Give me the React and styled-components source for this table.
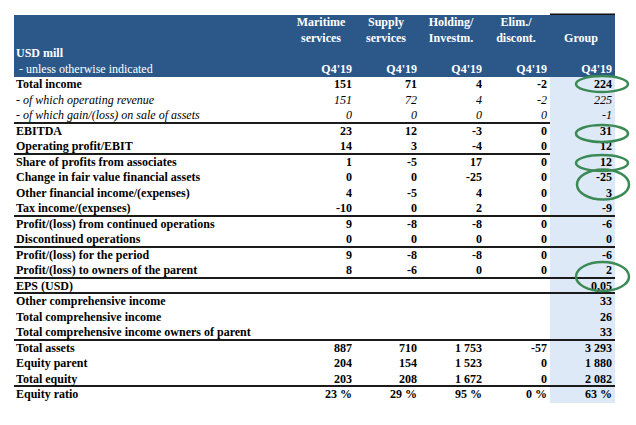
import React from "react";
import styled, { createGlobalStyle } from "styled-components";

const GlobalStyle = createGlobalStyle`
  html, body {
    margin: 0;
    padding: 0;
    background: #fff;
  }
  body {
    font-family: "Liberation Serif", "Times New Roman", serif;
    font-size: 12px;
    color: #000;
  }
`;

const BLUE = "#2b5889";
const LIGHT = "#dde9f6";
const COLS = "276px repeat(5, 65px)";

const Page = styled.div`
  position: relative;
  width: 636px;
  height: 425px;
  box-sizing: border-box;
  padding: 15px 0 0 14px;
  overflow: hidden;
`;

const Table = styled.div`
  width: 601px;
`;

const Head = styled.div`
  display: grid;
  grid-template-columns: ${COLS};
  background: ${BLUE};
  color: #fff;
  font-weight: bold;
`;

const HeadCol = styled.div`
  display: grid;
  grid-template-rows: repeat(4, 15.5px);
  line-height: 15.5px;
  white-space: nowrap;
  ${(p) => p.$top && "box-shadow: 0 -1.5px 0 #111;"}
`;

const HeadLine = styled.div`
  text-align: ${(p) => p.$align || "center"};
  padding: 0 3px 0 ${(p) => (p.$indent ? "2px" : "0")};
  font-weight: ${(p) => (p.$light ? "normal" : "bold")};
`;

const Row = styled.div`
  display: grid;
  grid-template-columns: ${COLS};
  height: 15.5px;
  line-height: 15.5px;
`;

const Cell = styled.div`
  box-sizing: border-box;
  padding: 0 3px;
  text-align: right;
  white-space: nowrap;
  font-weight: ${(p) => (p.$italic ? "normal" : "bold")};
  font-style: ${(p) => (p.$italic ? "italic" : "normal")};
  background: ${(p) => (p.$group ? LIGHT : "transparent")};
  box-shadow: ${(p) => (p.$rule ? "inset 0 -2px 0 #1b1b1b" : "none")};
`;

const Label = styled(Cell)`
  text-align: left;
  padding-left: 2px;
`;

const Dash = styled.span`
  font-style: normal;
`;

const Marks = styled.svg`
  position: absolute;
  top: 0;
  left: 0;
  pointer-events: none;
`;

const columns = [
  ["Maritime", "services"],
  ["Supply", "services"],
  ["Holding/", "Investm."],
  ["Elim./", "discont."],
  ["", "Group"],
];

const rows = [
  { label: "Total income", v: ["151", "71", "4", "-2", "224"] },
  { label: "of which operating revenue", italic: true, v: ["151", "72", "4", "-2", "225"] },
  { label: "of which gain/(loss) on sale of assets", italic: true, v: ["0", "0", "0", "0", "-1"], rule: "part" },
  { label: "EBITDA", v: ["23", "12", "-3", "0", "31"] },
  { label: "Operating profit/EBIT", v: ["14", "3", "-4", "0", "12"], rule: "part" },
  { label: "Share of profits from associates", v: ["1", "-5", "17", "0", "12"] },
  { label: "Change in fair value financial assets", v: ["0", "0", "-25", "0", "-25"] },
  { label: "Other financial income/(expenses)", v: ["4", "-5", "4", "0", "3"] },
  { label: "Tax income/(expenses)", v: ["-10", "0", "2", "0", "-9"], rule: "full" },
  { label: "Profit/(loss) from continued operations", v: ["9", "-8", "-8", "0", "-6"] },
  { label: "Discontinued operations", v: ["0", "0", "0", "0", "0"], rule: "full" },
  { label: "Profit/(loss) for the period", v: ["9", "-8", "-8", "0", "-6"] },
  { label: "Profit/(loss) to owners of the parent", v: ["8", "-6", "0", "0", "2"], rule: "full" },
  { label: "EPS (USD)", v: ["", "", "", "", "0,05"], rule: "full" },
  { label: "Other comprehensive income", v: ["", "", "", "", "33"] },
  { label: "Total comprehensive income", v: ["", "", "", "", "26"] },
  { label: "Total comprehensive income owners of parent", v: ["", "", "", "", "33"], rule: "full" },
  { label: "Total assets", v: ["887", "710", "1 753", "-57", "3 293"] },
  { label: "Equity parent", v: ["204", "154", "1 523", "0", "1 880"] },
  { label: "Total equity", v: ["203", "208", "1 672", "0", "2 082"], rule: "full" },
  { label: "Equity ratio", v: ["23 %", "29 %", "95 %", "0 %", "63 %"] },
];

// hand-drawn highlight rings over the Group column
const rings = [
  { cx: 602, cy: 84, rx: 26, ry: 8 },
  { cx: 602, cy: 133.5, rx: 26, ry: 8.5 },
  { cx: 602, cy: 163, rx: 26, ry: 8 },
  { cx: 603, cy: 184.5, rx: 26, ry: 15 },
  { cx: 602.5, cy: 276.5, rx: 26.5, ry: 14.5 },
];

export default function App() {
  return (
    <>
      <GlobalStyle />
      <Page>
        <Table>
          <Head>
            <HeadCol>
              <HeadLine />
              <HeadLine />
              <HeadLine $align="left" $indent>USD mill</HeadLine>
              <HeadLine $align="left" $indent $light>&nbsp;- unless otherwise indicated</HeadLine>
            </HeadCol>
            {columns.map(([a, b], i) => (
              <HeadCol key={i} $top={i === 4}>
                <HeadLine>{a}</HeadLine>
                <HeadLine>{b}</HeadLine>
                <HeadLine />
                <HeadLine $align="right">Q4'19</HeadLine>
              </HeadCol>
            ))}
          </Head>
          {rows.map((r, i) => (
            <Row key={i}>
              <Label $italic={r.italic} $rule={!!r.rule}>
                {r.italic ? (
                  <>
                    <Dash>- </Dash>
                    {r.label}
                  </>
                ) : (
                  r.label
                )}
              </Label>
              {r.v.map((val, j) => (
                <Cell
                  key={j}
                  $italic={r.italic}
                  $group={j === 4}
                  $rule={r.rule === "full" || (r.rule === "part" && j < 4)}
                >
                  {val}
                </Cell>
              ))}
            </Row>
          ))}
        </Table>
        <Marks width="636" height="425" viewBox="0 0 636 425">
          {rings.map((e, i) => (
            <ellipse
              key={i}
              cx={e.cx}
              cy={e.cy}
              rx={e.rx}
              ry={e.ry}
              fill="none"
              stroke="#3b8a56"
              strokeWidth="2.5"
            />
          ))}
        </Marks>
      </Page>
    </>
  );
}
